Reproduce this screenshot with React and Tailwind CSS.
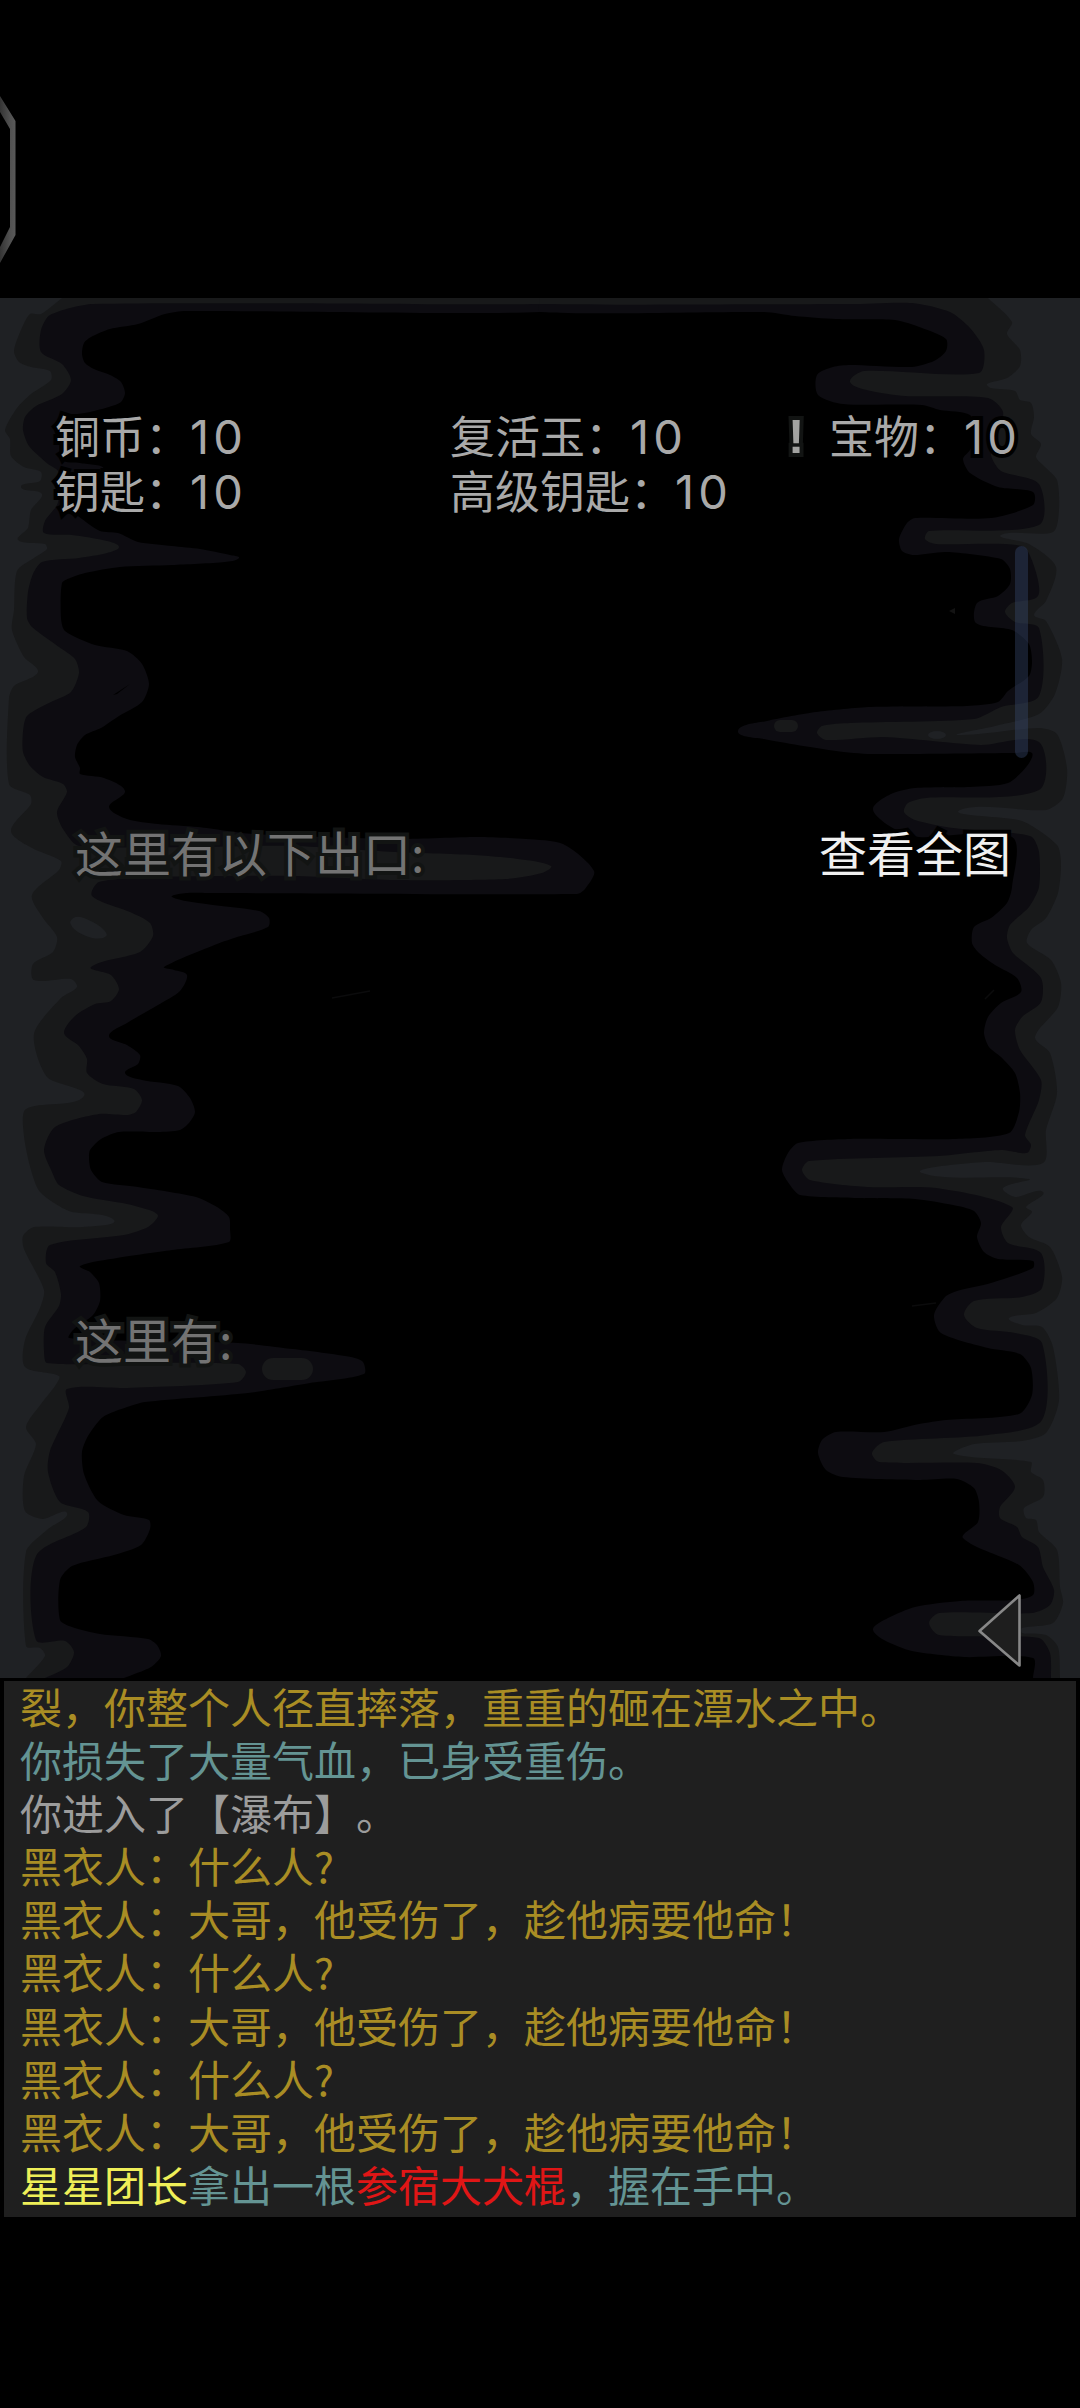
const CJK = "font-['Noto_Sans_CJK_SC',sans-serif]";

// smooth line through "x,y x,y ..." points
function curve(points) {
  const p = points.trim().split(/\s+/).map((s) => s.split(',').map(Number));
  let d = `L${p[0][0]} ${p[0][1]}`;
  for (let i = 0; i < p.length - 1; i++) {
    const a = p[i - 1] || p[i];
    const b = p[i];
    const c = p[i + 1];
    const e = p[i + 2] || c;
    // handle length follows the segment, so that long segments don't bulge the corners
    const len = Math.hypot(c[0] - b[0], c[1] - b[1]) * 0.24;
    const ac = Math.hypot(c[0] - a[0], c[1] - a[1]) || 1;
    const be = Math.hypot(e[0] - b[0], e[1] - b[1]) || 1;
    const x1 = b[0] + ((c[0] - a[0]) / ac) * len;
    const y1 = b[1] + ((c[1] - a[1]) / ac) * len;
    const x2 = c[0] - ((e[0] - b[0]) / be) * len;
    const y2 = c[1] - ((e[1] - b[1]) / be) * len;
    d += ` C${x1.toFixed(1)} ${y1.toFixed(1)} ${x2.toFixed(1)} ${y2.toFixed(1)} ${c[0]} ${c[1]}`;
  }
  return d;
}

const leftPath = (points) => `M0 298 ${curve(points)} L0 1678 Z`;
const rightPath = (points) => `M1080 298 ${curve(points)} L1080 1678 Z`;

// cave walls, from the inner shade to the outer one
const LEFT_DEEP = `540,298 540,312 186,311 165,314 138,324 110,329 91,337 84,343 82,354 85,363 94,369 110,375 121,382 125,393 121,402 109,407 90,412 66,418 60,440 62,460 80,463 103,469 70,474 60,485 65,505 82,519 100,531 118,533 138,542 172,546 200,549 230,555 239,558 225,562 172,565 120,567 85,573 70,578 62,583 61,618 65,631 95,645 127,651 142,664 149,684 142,702 119,716 101,728 85,735 77,745 75,757 80,768 80,774 104,778 125,791 109,807 127,819 158,824 198,827 253,834 395,839 478,837 526,839 563,844 594,871 585,889 577,894 213,893 186,893 172,897 206,904 259,911 269,918 268,927 237,937 217,944 164,967 174,970 187,975 180,991 158,1005 127,1023 109,1036 127,1045 140,1055 138,1064 125,1073 142,1080 178,1086 190,1098 195,1112 189,1123 180,1130 158,1132 119,1132 101,1139 90,1150 89,1158 91,1170 102,1182 138,1187 196,1197 217,1207 229,1217 230,1229 229,1242 172,1250 117,1258 80,1266 90,1272 99,1283 100,1301 93,1315 74,1329 69,1338 150,1341 238,1343 293,1349 351,1357 363,1362 364,1374 310,1383 248,1393 145,1402 127,1407 103,1417 88,1436 82,1452 84,1474 98,1501 124,1515 149,1520 150,1529 141,1545 114,1555 72,1566 60,1580 60,1620 72,1627 100,1634 148,1639 157,1645 161,1656 151,1667 124,1678`;

const LEFT_MID = `540,298 540,304 93,304 50,315 41,330 41,352 62,364 71,380 62,394 36,406 25,417 23,430 29,446 48,464 58,471 60,489 57,505 45,521 44,533 72,535 107,541 119,547 107,553 79,558 42,562 33,574 28,592 27,618 32,627 59,647 75,659 79,673 71,692 51,702 27,716 23,732 23,752 30,766 43,777 63,784 67,792 57,812 63,829 79,846 293,846 395,852 474,855 518,859 551,866 542,873 506,879 395,880 293,876 158,877 99,882 92,896 130,912 150,923 153,936 140,952 91,967 111,975 119,989 111,1001 95,1004 75,1016 64,1033 79,1046 87,1059 87,1073 103,1084 134,1089 142,1100 136,1112 127,1115 99,1114 55,1127 44,1150 52,1172 59,1185 83,1196 127,1204 152,1211 158,1216 148,1227 124,1235 50,1245 46,1263 55,1272 61,1294 59,1306 45,1327 44,1351 47,1363 138,1363 238,1364 246,1372 238,1382 127,1388 67,1389 69,1408 50,1451 48,1472 60,1502 88,1512 86,1527 36,1556 36,1640 65,1641 74,1652 67,1667 45,1678`;

const LEFT_EDGE = `62,298 41,314 30,314 21,330 14,351 19,362 31,367 50,371 51,380 31,394 17,408 5,430 10,439 11,456 24,467 41,472 40,481 21,487 42,494 31,510 28,528 18,540 45,544 47,549 34,558 17,571 14,610 12,630 24,657 38,672 14,686 9,698 9,784 30,795 31,804 11,831 32,848 61,861 59,870 32,895 43,918 57,937 53,952 33,964 34,980 71,979 77,987 61,998 34,1034 47,1077 84,1096 26,1109 24,1136 31,1170 40,1192 69,1211 114,1220 83,1227 34,1227 23,1236 24,1249 44,1290 40,1308 25,1340 25,1367 59,1376 55,1386 41,1404 26,1427 36,1444 24,1476 25,1511 43,1519 67,1513 48,1529 26,1552 26,1646 40,1648 45,1656 26,1678`;

const RIGHT_DEEP = `540,298 540,312 764,312 795,316 836,319 895,320 922,328 946,339 946,351 934,361 912,367 850,365 833,367 817,375 818,395 843,404 922,405 940,410 970,415 976,435 970,450 963,459 970,473 998,487 1033,492 1033,505 991,518 915,518 907,523 899,539 902,551 914,555 946,552 1001,559 1010,569 1010,584 998,596 977,603 976,623 1012,630 1029,644 1032,662 1029,676 1008,691 998,702 967,706 871,707 816,712 767,721 738,731 764,739 836,751 871,754 1015,753 1032,753 1027,766 1008,783 970,787 915,788 891,794 873,809 891,827 919,837 1012,837 1012,887 1007,903 991,918 974,927 972,943 979,953 995,965 1017,978 1021,992 1001,1003 988,1017 984,1033 989,1047 1001,1057 1015,1073 1020,1093 1019,1112 1009,1133 953,1139 850,1139 798,1143 788,1153 782,1170 790,1185 800,1195 857,1198 915,1199 953,1205 974,1211 981,1223 977,1237 984,1252 998,1259 1033,1261 1033,1268 991,1283 957,1291 945,1297 934,1315 941,1333 988,1348 1020,1354 1031,1368 1032,1395 1019,1414 946,1420 919,1424 884,1432 836,1432 822,1440 818,1453 826,1470 843,1477 919,1480 957,1479 974,1488 979,1502 978,1522 963,1538 1019,1565 1033,1582 1033,1595 1015,1600 960,1601 915,1607 888,1618 873,1629 884,1640 912,1651 964,1657 1033,1658 1033,1678`;

const RIGHT_MID = `540,298 540,304 850,304 912,303 950,312 970,328 984,350 979,373 864,371 850,382 871,391 905,396 988,398 1003,412 996,440 991,455 1001,471 1039,484 1039,525 929,531 925,539 936,544 1022,546 1034,566 1038,596 1012,603 1005,612 1015,622 1039,628 1039,696 1001,707 974,719 850,723 822,726 817,733 826,740 884,737 981,745 1039,742 1039,790 926,798 908,803 904,812 915,820 953,828 1012,833 1032,837 1039,852 1039,887 1029,907 1010,925 1007,938 1013,953 1041,978 1041,1002 1022,1017 1015,1030 1020,1050 1041,1080 1039,1100 1025,1135 1031,1145 1027,1153 1001,1150 939,1156 809,1161 802,1170 810,1180 867,1187 936,1188 1012,1207 1001,1227 1008,1243 1041,1253 1042,1288 1022,1297 974,1301 964,1315 977,1328 1015,1333 1042,1343 1042,1420 988,1435 884,1442 872,1453 879,1462 977,1463 1001,1470 1015,1487 1000,1507 1000,1518 1017,1527 1022,1537 1038,1547 1043,1567 1054,1590 1050,1605 1032,1613 939,1613 929,1623 939,1635 1039,1638 1050,1653 1051,1678`;

const RIGHT_EDGE = `988,298 1012,322 1007,334 1020,350 1020,366 1007,378 987,384 991,388 1015,391 1020,400 1031,403 1034,417 1031,434 1041,444 1036,457 1045,467 1057,480 1059,509 1053,532 1001,535 1029,544 1056,567 1046,601 1034,615 1046,621 1062,659 1055,694 1039,714 995,726 958,735 1039,728 1057,734 1067,769 1063,798 1046,810 960,810 1022,821 1057,845 1061,863 1058,893 1046,918 1031,930 1027,943 1051,960 1061,983 1058,1007 1035,1037 1050,1053 1057,1093 1046,1130 1043,1163 984,1162 922,1173 1029,1179 1003,1188 1015,1197 1043,1192 1026,1207 1032,1212 1021,1225 1029,1237 1050,1247 1062,1277 1057,1298 1036,1313 1009,1318 1022,1325 1042,1327 1053,1347 1059,1400 1046,1433 1022,1441 974,1444 954,1454 1031,1462 1031,1472 1043,1480 1043,1497 1024,1508 1026,1518 1036,1520 1039,1532 1057,1550 1060,1587 1063,1603 1053,1623 1022,1628 1022,1633 1046,1635 1058,1647 1060,1678`;

const LOG = [
  [['gold', '裂，你整个人径直摔落，重重的砸在潭水之中。']],
  [['teal', '你损失了大量气血，已身受重伤。']],
  [['gray', '你进入了【瀑布】。']],
  [['gold', '黑衣人：什么人?']],
  [['gold', '黑衣人：大哥，他受伤了，趁他病要他命！']],
  [['gold', '黑衣人：什么人?']],
  [['gold', '黑衣人：大哥，他受伤了，趁他病要他命！']],
  [['gold', '黑衣人：什么人?']],
  [['gold', '黑衣人：大哥，他受伤了，趁他病要他命！']],
  [
    ['yellow', '星星团长'],
    ['teal', '拿出一根'],
    ['red', '参宿大犬棍'],
    ['teal', '，握在手中。'],
  ],
];

const LOG_COLORS = {
  gold: 'text-[#a98d24]',
  teal: 'text-[#649493]',
  gray: 'text-[#9c9c9c]',
  yellow: 'text-[#efef58]',
  red: 'text-[#e01616]',
};

// dark rim that keeps the text readable over the walls
const BLACK_RIM = '[paint-order:stroke_fill] [-webkit-text-stroke:8px_#000] [stroke-linejoin:round]';
const GRAY_RIM = '[paint-order:stroke_fill] [-webkit-text-stroke:8px_#121413] [stroke-linejoin:round]';

function CaveWalls() {
  return (
    <svg className="absolute inset-0" width="1080" height="1380" viewBox="0 298 1080 1380">
      <g fill="#0d0c11">
        <path d={leftPath(LEFT_DEEP)} />
        <path d={rightPath(RIGHT_DEEP)} />
      </g>
      <g fill="#18191a">
        <path d={leftPath(LEFT_MID)} />
        <path d={rightPath(RIGHT_MID)} />
        <rect x="262" y="1358" width="51" height="22" rx="11" />
        <rect x="774" y="720" width="24" height="12" rx="6" />
      </g>
      <g fill="#1f2124">
        <path d={leftPath(LEFT_EDGE)} />
        <path d={rightPath(RIGHT_EDGE)} />
        <path d="M70 922 Q74 914 84 918 Q104 926 107 935 Q104 940 92 938 Q72 932 70 922Z" />
        <ellipse cx="937" cy="735" rx="9" ry="4" />
      </g>
      <path d="M113 695 L130 684 L117 694Z" fill="#000" />
      <path d="M949 611 L955 608 L955 614Z" fill="#131313" />
      <path d="M332 998 L370 991 M985 999 L994 990 M912 1306 L936 1303" stroke="#0b0b0c" strokeWidth="1.5" />
    </svg>
  );
}

function Stat({ label, value }) {
  return (
    <div className="h-[55px]">
      {label}：<span className="font-['Inter',sans-serif] text-[47px] leading-none tracking-[4px]">{value}</span>
    </div>
  );
}

function SideTab() {
  return (
    <svg className="mt-[92px] block" width="18" height="176" viewBox="0 92 18 176">
      <defs>
        <linearGradient id="tab" x1="0" x2="16" y1="0" y2="0" gradientUnits="userSpaceOnUse">
          <stop offset="0" stopColor="#343434" />
          <stop offset="0.6" stopColor="#505050" />
          <stop offset="1" stopColor="#5a5a5a" />
        </linearGradient>
      </defs>
      <path d="M0 96 L15.5 121 V235 L0 263 V247 L10 227 V129 L0 112Z" fill="url(#tab)" />
    </svg>
  );
}

export default function App() {
  return (
    <div className={`w-[1080px] h-[2408px] overflow-hidden bg-black whitespace-nowrap [text-spacing-trim:space-all] ${CJK}`}>
      <header className="flow-root h-[298px]">
        <SideTab />
      </header>

      <main className="relative h-[1380px] overflow-hidden">
        <CaveWalls />
        <div className="absolute left-[1015px] top-[248px] w-[13px] h-[212px] rounded-full bg-[#38486e]/40" />

        <div className="relative flex h-full flex-col">
          <div className={`grid h-[110px] grid-cols-[395px_337px_1fr] grid-rows-[55px_55px] mt-[109px] pl-[55px] text-[45px] leading-[55px] text-[#a9a9a9] ${BLACK_RIM}`}>
            <Stat label="铜币" value="10" />
            <Stat label="复活玉" value="10" />
            <div className="flex">
              <span className={`w-[42px] pl-[1px] pt-[2px] font-['Liberation_Sans',sans-serif] text-[49px] font-bold text-[#a3a3a1] ${GRAY_RIM}`}>!</span>
              <Stat label="宝物" value="10" />
            </div>
            <Stat label="钥匙" value="10" />
            <Stat label="高级钥匙" value="10" />
          </div>

          <div className="mt-[302px] flex justify-between pl-[75px] pr-[69px] text-[48px] leading-[64px]">
            <span className={`text-[#737373] ${GRAY_RIM}`}>这里有以下出口:</span>
            <button className={`text-[#f0f0f0] ${BLACK_RIM}`}>查看全图</button>
          </div>

          <div className={`mt-[423px] pl-[75px] text-[48px] leading-[64px] text-[#737373] ${GRAY_RIM}`}>
            这里有:
          </div>
        </div>

        <button className="absolute left-[975px] top-[1292px]">
          <svg width="50" height="80" viewBox="975 1590 50 80">
            <path d="M979.5 1631 L1019.5 1595.5 V1665.5Z" fill="#1e1e1e" stroke="#888" strokeWidth="2.6" strokeLinejoin="round" />
          </svg>
        </button>
      </main>

      <section className="mx-[4px] mt-[3px] flex h-[536px] flex-col bg-[#1f1f1f] pl-[16px] text-[42px] leading-[53.1px]">
        <div className="-mt-[2px]">
          {LOG.map((line, i) => (
            <p key={i}>
              {line.map(([color, text]) => (
                <span key={text} className={LOG_COLORS[color]}>{text}</span>
              ))}
            </p>
          ))}
        </div>
      </section>
    </div>
  );
}
